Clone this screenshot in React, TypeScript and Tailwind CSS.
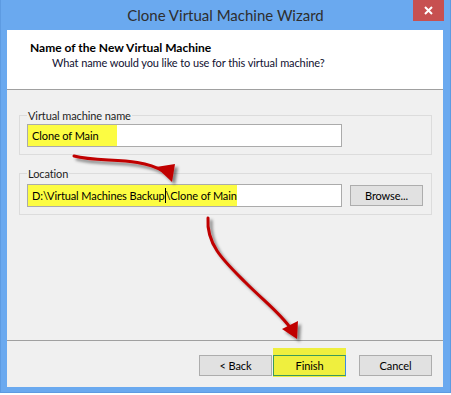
import React from "react";

export default function App() {
  return (
    <div className="w-[451px] h-[395px] bg-white relative font-['Lato','Noto_Sans',sans-serif]">
      <div className="w-[451px] h-[393px] bg-[#6AA9EF] border-l border-r border-b border-[#5D9BE2] flex flex-col relative">
        {/* Title bar */}
        <div className="h-[30px] flex items-center justify-center relative shrink-0">
          <span className="text-[15px] text-[#2E2E2E] leading-none pt-[1px]">Clone Virtual Machine Wizard</span>
          <div className="absolute right-[6px] top-0 w-[31px] h-[21px] bg-[#C75050] flex items-center justify-center">
            <svg width="9" height="9" viewBox="0 0 9 9">
              <path d="M1 1 L8 8 M8 1 L1 8" stroke="white" strokeWidth="2" />
            </svg>
          </div>
        </div>
        {/* Client */}
        <div className="ml-[6px] mr-[7px] h-[357px] bg-[#F0F0F0] flex flex-col">
          <div className="h-[60px] bg-white border-b border-[#A0A0A0] pl-[23px] pt-[10px] shrink-0">
            <div className="text-[12px] leading-[15px] font-bold text-black">Name of the New Virtual Machine</div>
            <div className="text-[11px] tracking-[-0.1px] leading-[15px] text-[#101030] pl-[22px]">What name would you like to use for this virtual machine?</div>
          </div>
          <div className="flex-1 pl-[12px] pr-[11px] pt-[18px] text-[11px] tracking-[-0.1px]">
            <fieldset className="border border-[#DCDCDC] px-[7px] pb-[7px]">
              <legend className="px-[1px] leading-[15px] text-[#1E1E1E]">Virtual machine name</legend>
              <div className="mt-[1px] w-[315px] h-[23px] bg-white border border-[#ABABAB] flex">
                <div className="w-[89px] h-full bg-[#FCFC42] leading-[21px] pl-[4px] text-black whitespace-nowrap">Clone of Main</div>
              </div>
            </fieldset>
            <fieldset className="mt-[11px] border border-[#DCDCDC] px-[7px] pb-[7px]">
              <legend className="px-[1px] leading-[15px] text-[#1E1E1E]">Location</legend>
              <div className="mt-[3px] flex items-start gap-[8px]">
                <div className="w-[315px] h-[23px] bg-white border border-[#ABABAB] flex">
                  <div className="w-[209px] h-full bg-[#FCFC42] leading-[21px] pl-[4px] text-black whitespace-nowrap flex">
                    <span>D:\Virtual Machines Backup</span>
                    <span className="w-[1px] h-[15px] bg-black mt-[3px]"></span>
                    <span>\Clone of Main</span>
                  </div>
                </div>
                <button className="mt-[1px] w-[73px] h-[21px] bg-[#E1E1E1] border border-[#ADADAD] leading-none text-black">Browse...</button>
              </div>
            </fieldset>
          </div>
          <div className="h-[47px] border-t border-[#A0A0A0] flex items-start justify-end pr-[11px] shrink-0 text-[11px] tracking-[-0.1px]">
            <button className="mt-[14px] w-[73px] h-[21px] bg-[#E1E1E1] border border-[#ADADAD] leading-none text-black">&lt; Back</button>
            <div className="ml-[1px] mt-[7px] w-[73px] h-[29px] bg-[#EFEF3E] pt-[7px]">
              <button className="w-[73px] h-[21px] bg-[#EFEF3E] border border-[#3C9A5A] border-r-[#3C8CE0] leading-none text-black">Finish</button>
            </div>
            <button className="ml-[13px] mt-[14px] w-[73px] h-[21px] bg-[#E1E1E1] border border-[#ADADAD] leading-none text-black">Cancel</button>
          </div>
        </div>
      </div>
      {/* Arrows overlay */}
      <svg className="absolute inset-0 pointer-events-none" width="451" height="395" viewBox="0 0 451 395">
        <defs>
          <filter id="sh" x="-20%" y="-20%" width="140%" height="140%">
            <feDropShadow dx="3" dy="3" stdDeviation="1.5" floodColor="#000" floodOpacity="0.45" />
          </filter>
        </defs>
        <g filter="url(#sh)">
          <path d="M74 156 C 100 163, 138 156, 163 171" stroke="#C00000" strokeWidth="3" fill="none" strokeLinecap="round" />
          <polygon points="156,167 175,164 172,182" fill="#C00000" />
          <path d="M208 218 C 206 245, 225 262, 245 282 S 282 315, 291 329" stroke="#C00000" strokeWidth="3" fill="none" strokeLinecap="round" />
          <polygon points="282,329 298,321 297,339" fill="#C00000" />
        </g>
      </svg>
    </div>
  );
}
